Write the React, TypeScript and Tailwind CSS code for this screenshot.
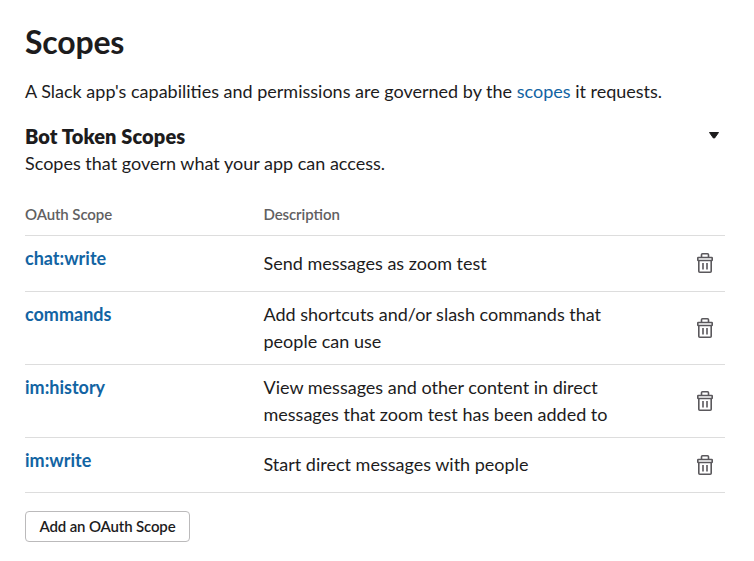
import React from 'react';

interface Scope {
  name: string;
  description: string;
  rowClassName: string;
}

const scopes: Scope[] = [
  { name: 'chat:write', description: 'Send messages as zoom test', rowClassName: 'h-[56px]' },
  { name: 'commands', description: 'Add shortcuts and/or slash commands that people can use', rowClassName: 'h-[73px]' },
  { name: 'im:history', description: 'View messages and other content in direct messages that zoom test has been added to', rowClassName: 'h-[73px]' },
  { name: 'im:write', description: 'Start direct messages with people', rowClassName: 'h-[55px]' },
];

function TrashIcon() {
  return (
    <svg width="16" height="20" viewBox="0 0 16 20" fill="none" stroke="#5a585c" strokeWidth="1.6" strokeLinejoin="round">
      <path d="M4.5 4V1.8q0-1 1-1h5q1 0 1 1V4" />
      <rect x=".8" y="4.5" width="14.4" height="3" rx=".5" />
      <path d="M1.8 7.5v10.7q0 1 1 1h10.4q1 0 1-1V7.5" />
      <path d="M6 10v6.5M10 10v6.5" />
    </svg>
  );
}

export default function App() {
  return (
    <div className="h-[561px] w-[754px] overflow-hidden bg-white pl-[25px] pr-[29px] pt-[22px] font-['Lato',sans-serif] text-[18px] leading-[27px] text-[#1d1c1d]">
      <h1 className="text-[32px] font-bold leading-[40px] tracking-[-0.2px]">Scopes</h1>
      <p className="mt-[16px]">
        A Slack app's capabilities and permissions are governed by the <a href="#" className="text-[#1264a3]">scopes</a> it requests.
      </p>
      <div className="mt-[18px] flex items-start justify-between">
        <div>
          <h2 className="text-[20px] font-extrabold leading-[27px] tracking-[0.1px]">Bot Token Scopes</h2>
          <p>Scopes that govern what your app can access.</p>
        </div>
        <svg width="12" height="7" viewBox="0 0 12 7" className="mr-[5px] mt-[9px]">
          <path d="M1.5 .5h9L6.6 6H5.4z" fill="#1d1c1d" stroke="#1d1c1d" strokeLinejoin="round" />
        </svg>
      </div>
      <table className="mt-[17px] w-full table-fixed border-collapse text-left">
        <thead>
          <tr className="h-[41px] border-b border-[#dddddd] text-[15px] text-[#616061]">
            <th className="w-[238.5px] p-0 font-semibold tracking-[-0.1px] [font-variant-ligatures:common-ligatures]">OAuth Scope</th>
            <th className="p-0 font-semibold tracking-[-0.1px] [font-variant-ligatures:common-ligatures]">Descrip<span className="tracking-normal">ti</span>on</th>
            <th className="w-[88px] p-0" />
          </tr>
        </thead>
        <tbody>
          {scopes.map(scope => (
            <tr key={scope.name} className={`border-b border-[#dddddd] ${scope.rowClassName}`}>
              <td className="p-0 pt-[9px] align-top font-bold text-[#1264a3]">{scope.name}</td>
              <td className="p-0">{scope.description}</td>
              <td className="p-0 pr-[12px] align-middle">
                <button aria-label="Delete" className="ml-auto block"><TrashIcon /></button>
              </td>
            </tr>
          ))}
        </tbody>
      </table>
      <button className="mt-[18px] h-[31px] w-[165px] rounded-[4px] border border-[#bbbabb] text-[15px] font-semibold leading-[29px] tracking-[-0.15px]">Add an OAuth Scope</button>
    </div>
  );
}
